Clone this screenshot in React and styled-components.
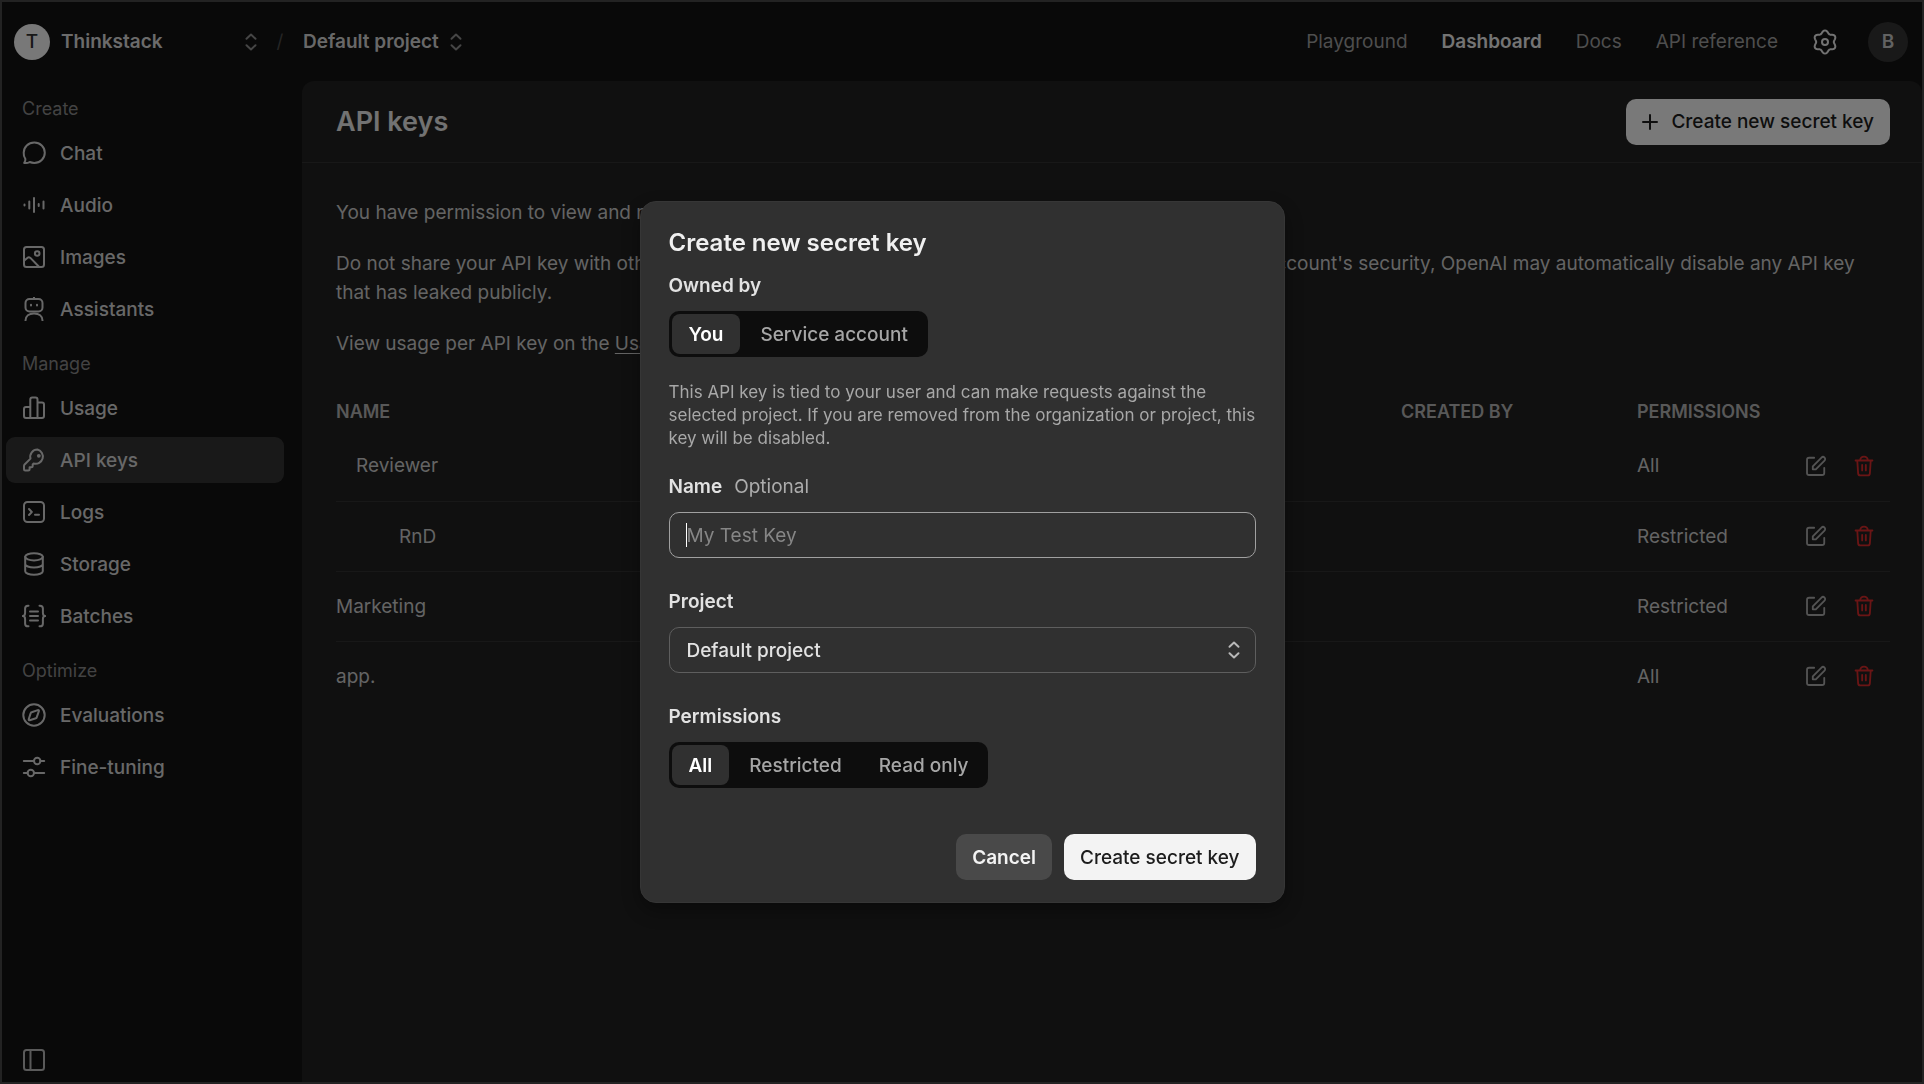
import React, { useState } from "react";
import styled, { createGlobalStyle, css } from "styled-components";

const GlobalStyle = createGlobalStyle`
  *, *::before, *::after { box-sizing: border-box; }
  html, body { margin: 0; background: #121212; }
  body, button, input, select {
    font-family: Inter, "Liberation Sans", sans-serif;
    font-size: 19px;
  }
  h1, h2, p { margin: 0; padding: 0; }
  a { color: inherit; text-decoration: none; }
  button { cursor: pointer; border: 0; background: none; padding: 0; color: inherit; }
`;

/* ---------- icons ---------- */

const Svg = styled.svg`
  display: block;
  flex: none;
  fill: none;
  stroke: currentColor;
  stroke-width: 2;
  stroke-linecap: round;
  stroke-linejoin: round;
`;

const Icon = ({ size = 24, children }) => (
  <Svg width={size} height={size} viewBox="0 0 24 24" aria-hidden="true">
    {children}
  </Svg>
);

const ChatIcon = () => (
  <Icon>
    <path d="M12.3 1.5c5.9 0 10.5 4.5 10.5 10.2s-4.600 10.200-10.500 10.200c-1.700 0-3.200-.3-4.600-.9-1.500.9-3.600 1.300-5.500.9.9-1.200 1.300-2.500 1.200-3.900A10 10 0 0 1 1.700 11.700C1.700 6 6.400 1.500 12.300 1.500z" />
  </Icon>
);
const AudioIcon = () => (
  <Icon>
    <path d="M2.500 11.500v1M7.300 8.500v7M12 5v14M16.700 11v2M21.500 8.500v7" />
  </Icon>
);
const ImagesIcon = () => (
  <Icon>
    <rect x="2" y="2" width="20" height="20" rx="2.500" />
    <circle cx="15.200" cy="8.500" r="2.300" />
    <path d="M2.300 15.500l3-2.600c.9-.8 2.200-.8 3.100 0l8.600 8.800" />
  </Icon>
);
const AssistantsIcon = () => (
  <Icon>
    <path d="M12 0v2" />
    <rect x="3.500" y="2" width="17" height="12.500" rx="4" />
    <path d="M9 7.800v.6M15 7.800v.6M3.500 23.500c0-4.600 3.600-7 8.500-7s8.500 2.400 8.500 7" />
  </Icon>
);
const UsageIcon = () => (
  <Icon>
    <path d="M8.300 22V3.500c0-1.200.8-2 2-2h3.200c1.200 0 2 .8 2 2V22M8.300 11H4c-1.200 0-2 .8-2 2v7c0 1.200.8 2 2 2h16c1.200 0 2-.8 2-2V8.500c0-1.200-.8-2-2-2h-4.500" />
  </Icon>
);
const KeyIcon = () => (
  <Icon>
    <path d="M15.500 1.500a7.200 7.200 0 0 0-7 9.100L2.600 16.500a2 2 0 0 0-.6 1.400v3.300c0 .7.5 1.200 1.200 1.200h2.900c.8 0 1.500-.7 1.500-1.500v-1.600h1.600c.8 0 1.500-.7 1.500-1.500v-1.300l1-1a7.200 7.200 0 1 0 3.800-14z" />
    <circle cx="16.800" cy="7.800" r="1.900" fill="currentColor" stroke="none" />
  </Icon>
);
const LogsIcon = () => (
  <Icon>
    <rect x="2" y="2" width="20" height="20" rx="3.500" />
    <path d="M7 9l2.800 3L7 15M13 14.800h4" />
  </Icon>
);
const StorageIcon = () => (
  <Icon>
    <ellipse cx="12" cy="4.800" rx="8.800" ry="3.600" />
    <path d="M3.200 4.800v14.400c0 2 3.900 3.600 8.800 3.600s8.800-1.600 8.800-3.600V4.800M3.200 12c0 2 3.900 3.600 8.800 3.600s8.800-1.600 8.800-3.600" />
  </Icon>
);
const BatchesIcon = () => (
  <Icon>
    <path d="M6.500 1.700H6c-1.800 0-2.900 1.100-2.900 2.900v4.200C3.100 10.300 2.300 12 .8 12c1.500 0 2.300 1.700 2.300 3.200v4.200c0 1.800 1.100 2.900 2.900 2.900h.5M17.500 1.700h.5c1.800 0 2.900 1.100 2.900 2.900v4.200c0 1.500.8 3.200 2.300 3.200-1.500 0-2.300 1.700-2.300 3.200v4.200c0 1.800-1.100 2.900-2.900 2.900h-.5M8 7.500h8M8 12h8M8 16.500h8" />
  </Icon>
);
const EvaluationsIcon = () => (
  <Icon>
    <circle cx="12" cy="12" r="10.700" />
    <path d="M9.600 9.300l6.200-2.200c.7-.2 1.300.4 1.100 1.100l-2.200 6.200c-.1.400-.4.700-.8.800l-6.200 2c-.7.200-1.200-.4-1-1l2-6.100c.1-.4.500-.7.900-.8z" />
  </Icon>
);
const TuningIcon = () => (
  <Icon>
    <circle cx="15.200" cy="6" r="3.200" />
    <circle cx="8.800" cy="18" r="3.200" />
    <path d="M1.800 6H12M18.400 6h3.800M1.800 18h3.800M12 18h10.200" />
  </Icon>
);
const PanelIcon = () => (
  <Icon>
    <rect x="2" y="2" width="20" height="20" rx="2.500" />
    <path d="M8.500 2v20" />
  </Icon>
);

const gearOutline =
  Array.from({ length: 72 }, (_, i) => {
    const a = (i / 72) * Math.PI * 2;
    const r = 10.2 + 1.4 * Math.cos(6 * a);
    const x = 13 + r * Math.sin(a);
    const y = 13 - r * Math.cos(a);
    return `${i ? "L" : "M"}${x.toFixed(2)} ${y.toFixed(2)}`;
  }).join("") + "z";

const GearIcon = () => (
  <Svg width={26} height={26} viewBox="0 0 26 26" aria-hidden="true">
    <path d={gearOutline} />
    <circle cx="13" cy="13" r="3" />
  </Svg>
);
const EditIcon = () => (
  <Icon size={22}>
    <path d="M10 3H4.500C3.100 3 2.200 3.900 2.200 5.300V19.500c0 1.400.9 2.300 2.300 2.300h14.200c1.400 0 2.300-.9 2.300-2.300V14" />
    <path d="M8.500 12.300L18 2.800a2.300 2.300 0 0 1 3.300 3.300l-9.500 9.500H8.500z" />
  </Icon>
);
const TrashIcon = () => (
  <Icon size={22}>
    <path d="M2.800 6h18.400M7.800 5.700C8 3.300 9.500 1.700 12 1.700s4 1.600 4.200 4M4.700 6.500l.9 13.500c.1 1.300 1 2.200 2.300 2.200h8.200c1.300 0 2.200-.9 2.300-2.200l.9-13.500M10 10.800v6M14 10.800v6" />
  </Icon>
);
const PlusIcon = () => (
  <Svg width={16} height={16} viewBox="0 0 16 16" aria-hidden="true">
    <path d="M8 1v14M1 8h14" />
  </Svg>
);
const ChevronsIcon = () => (
  <Svg width={12} height={18} viewBox="0 0 12 18" aria-hidden="true">
    <path d="M1.500 5.800L6 1.600l4.500 4.200M1.500 12.200L6 16.400l4.500-4.200" />
  </Svg>
);

/* ---------- page frame ---------- */

const Frame = styled.div`
  display: flex;
  flex-direction: column;
  min-height: 100vh;
  border: 2px solid #464646;
  background: #121212;
  color: #dadada;
`;

const TopBar = styled.header`
  display: flex;
  align-items: center;
  justify-content: space-between;
  height: 79px;
  padding: 0 14px 0 12px;
`;

const Switchers = styled.div`
  display: flex;
  align-items: center;
`;

const OrgButton = styled.button`
  display: flex;
  align-items: center;
  gap: 11px;
  width: 243px;
  font-weight: 600;
  color: #d6d6d6;
`;

const OrgName = styled.span`
  flex: 1;
  text-align: left;
`;

const Muted = styled.span`
  color: #8c8c8c;
`;

const Slash = styled.span`
  width: 46px;
  text-align: center;
  color: #4a4a4a;
`;

const ProjectButton = styled.button`
  display: flex;
  align-items: center;
  gap: 11px;
  font-weight: 600;
  color: #d0d0d0;
`;

const Avatar = styled.span`
  display: flex;
  align-items: center;
  justify-content: center;
  flex: none;
  border-radius: 50%;
  width: ${(p) => (p.$light ? 36 : 40)}px;
  height: ${(p) => (p.$light ? 36 : 40)}px;
  background: ${(p) => (p.$light ? "#f0f0f0" : "#323232")};
  color: ${(p) => (p.$light ? "#303030" : "#c4c4c4")};
  font-weight: ${(p) => (p.$light ? 500 : 600)};
`;

const TopNav = styled.nav`
  display: flex;
  align-items: center;
  gap: 34px;
`;

const TopLink = styled.a`
  color: ${(p) => (p.$active ? "#e8e8e8" : "#9c9c9c")};
  font-weight: ${(p) => (p.$active ? 600 : 400)};
`;

const AccountTools = styled.div`
  display: flex;
  align-items: center;
  gap: 30px;
`;

const ToolButton = styled.button`
  display: flex;
  color: ${(p) => (p.$danger ? "#d42a2a" : p.$bright ? "#e4e4e4" : "#a8a8a8")};
`;

const Body = styled.div`
  display: flex;
  flex: 1;
`;

/* ---------- sidebar ---------- */

const Sidebar = styled.nav`
  display: flex;
  flex-direction: column;
  width: 300px;
  padding: 13px 18px 10px 4px;
`;

const Group = styled.section`
  display: flex;
  flex-direction: column;
  gap: 6px;
  margin-bottom: 17px;
`;

const GroupLabel = styled.h2`
  padding-left: 16px;
  font-size: 18px;
  font-weight: 400;
  line-height: 30px;
  color: #868686;
`;

const NavItem = styled.a`
  display: flex;
  align-items: center;
  gap: 14px;
  height: 46px;
  padding-left: 16px;
  border-radius: 9px;
  font-weight: 500;
  color: #d0d0d0;
  background: ${(p) => (p.$active ? "#333333" : "transparent")};
`;

const CollapseButton = styled.button`
  display: flex;
  margin-top: auto;
  margin-left: 16px;
  color: #b4b4b4;
`;

/* ---------- main panel ---------- */

const Panel = styled.main`
  flex: 1;
  min-width: 0;
  border-radius: 12px 12px 0 0;
  background: #202020;
`;

const PanelHeader = styled.div`
  display: flex;
  align-items: center;
  justify-content: space-between;
  height: 82px;
  padding: 0 32px 0 34px;
  border-bottom: 1px solid #303030;
`;

const Title = styled.h1`
  font-size: 27px;
  font-weight: 600;
  color: #e4e4e4;
`;

const Button = styled.button`
  display: flex;
  align-items: center;
  gap: 13px;
  height: 46px;
  padding: 0 16px;
  border-radius: 10px;
  font-weight: ${(p) => (p.$variant === "secondary" ? 600 : 500)};
  background: ${(p) => (p.$variant === "secondary" ? "#494949" : "#f3f3f3")};
  color: ${(p) => (p.$variant === "secondary" ? "#f3f3f3" : "#1c1c1c")};
`;

const Content = styled.div`
  display: flex;
  flex-direction: column;
  gap: 22px;
  padding: 35px 32px 0 34px;
`;

const Text = styled.p`
  line-height: 29px;
  color: #c8c8c8;
`;

const Underlined = styled.a`
  text-decoration: underline;
  text-underline-offset: 3px;
`;

const Table = styled.table`
  width: 100%;
  margin-top: 13px;
  border-collapse: collapse;
  table-layout: fixed;
`;

const Col = styled.col`
  width: ${(p) => (p.$w ? `${p.$w}px` : "auto")};
`;

const Th = styled.th`
  padding: 0;
  text-align: left;
  font-size: 18px;
  font-weight: 600;
  line-height: 38px;
  text-transform: uppercase;
  color: #b0b0b0;
`;

const Tr = styled.tr`
  ${(p) =>
    p.$rule &&
    css`
      border-bottom: 1px solid #303030;
    `}
`;

const Td = styled.td`
  height: 70px;
  padding: 0 0 0 ${(p) => p.$indent || 0}px;
  color: #c8c8c8;
`;

const Actions = styled.div`
  display: flex;
  gap: 26px;
`;

/* ---------- dialog ---------- */

const Backdrop = styled.div`
  position: fixed;
  inset: 0;
  display: flex;
  align-items: center;
  justify-content: center;
  padding-top: 20px;
  background: rgba(0, 0, 0, 0.5);
`;

const Dialog = styled.form`
  width: 645px;
  padding: 25px 28px 22px;
  border: 1px solid #363636;
  border-radius: 16px;
  background: #303030;
  box-shadow: 0 8px 20px rgba(0, 0, 0, 0.35);
  color: #f0f0f0;
`;

const DialogTitle = styled.h2`
  margin-bottom: 12px;
  font-size: 24px;
  font-weight: 600;
  line-height: 32px;
`;

const Field = styled.div`
  display: flex;
  flex-direction: column;
  align-items: ${(p) => (p.$stretch ? "stretch" : "flex-start")};
  gap: 10px;
  margin-bottom: ${(p) => p.$after || 29}px;
`;

const FieldLabel = styled.label`
  display: flex;
  gap: 12px;
  font-weight: 600;
  line-height: 30px;
  color: #e2e2e2;
`;

const Optional = styled.span`
  font-weight: 400;
  color: #acacac;
`;

const Segments = styled.div`
  display: flex;
  gap: 3px;
  height: 46px;
  padding: 3px;
  border-radius: 10px;
  background: #0d0d0d;
`;

const Segment = styled.label`
  display: flex;
  align-items: center;
  padding: 0 17px;
  border-radius: 8px;
  font-weight: 500;
  color: #a6a6a6;
  cursor: pointer;
  &:has(input:checked) {
    background: #303030;
    color: #ffffff;
    font-weight: 600;
  }
`;

const HiddenRadio = styled.input`
  appearance: none;
  position: absolute;
  width: 1px;
  height: 1px;
  margin: 0;
  opacity: 0;
`;

const Note = styled.p`
  margin-bottom: 22px;
  font-size: 17px;
  line-height: 23px;
  color: #a8a8a8;
`;

const control = css`
  width: 100%;
  height: 46px;
  padding: 0 17px;
  border-radius: 10px;
  background: transparent;
  outline: none;
`;

const TextInput = styled.input`
  ${control}
  border: 1px solid #a0a0a0;
  color: #f0f0f0;
  caret-color: #ffffff;
  &::placeholder {
    color: #868686;
    opacity: 1;
  }
  &:placeholder-shown:focus {
    caret-color: transparent;
    background: linear-gradient(#ffffff, #ffffff) 16px center / 1px 24px no-repeat;
  }
`;

const SelectWrap = styled.div`
  display: grid;
  align-items: center;
  color: #b8b8b8;
  > * {
    grid-area: 1 / 1;
  }
  > svg {
    justify-self: end;
    margin-right: 16px;
    pointer-events: none;
  }
`;

const Select = styled.select`
  ${control}
  appearance: none;
  border: 1px solid #5e5e5e;
  font-weight: 500;
  color: #e2e2e2;
`;

const Footer = styled.div`
  display: flex;
  justify-content: flex-end;
  gap: 12px;
`;

/* ---------- data ---------- */

const groups = [
  {
    label: "Create",
    items: [
      ["Chat", ChatIcon],
      ["Audio", AudioIcon],
      ["Images", ImagesIcon],
      ["Assistants", AssistantsIcon],
    ],
  },
  {
    label: "Manage",
    items: [
      ["Usage", UsageIcon],
      ["API keys", KeyIcon],
      ["Logs", LogsIcon],
      ["Storage", StorageIcon],
      ["Batches", BatchesIcon],
    ],
  },
  {
    label: "Optimize",
    items: [
      ["Evaluations", EvaluationsIcon],
      ["Fine-tuning", TuningIcon],
    ],
  },
];

const keys = [
  { name: "Reviewer", indent: 20, permissions: "All" },
  { name: "RnD", indent: 63, permissions: "Restricted" },
  { name: "Marketing", permissions: "Restricted" },
  { name: "app.", permissions: "All" },
];

const SegmentedControl = ({ name, label, options }) => {
  const [value, setValue] = useState(options[0]);
  return (
    <Segments role="radiogroup" aria-label={label}>
      {options.map((o) => (
        <Segment key={o}>
          <HiddenRadio type="radio" name={name} checked={value === o} onChange={() => setValue(o)} />
          {o}
        </Segment>
      ))}
    </Segments>
  );
};

export default function App() {
  return (
    <>
      <GlobalStyle />
      <Frame>
        <TopBar>
          <Switchers>
            <OrgButton type="button">
              <Avatar $light>T</Avatar>
              <OrgName>Thinkstack</OrgName>
              <Muted>
                <ChevronsIcon />
              </Muted>
            </OrgButton>
            <Slash>/</Slash>
            <ProjectButton type="button">
              Default project
              <Muted>
                <ChevronsIcon />
              </Muted>
            </ProjectButton>
          </Switchers>
          <TopNav>
            <TopLink href="#playground">Playground</TopLink>
            <TopLink href="#dashboard" $active>
              Dashboard
            </TopLink>
            <TopLink href="#docs">Docs</TopLink>
            <TopLink href="#reference">API reference</TopLink>
            <AccountTools>
              <ToolButton type="button" aria-label="Settings" $bright>
                <GearIcon />
              </ToolButton>
              <Avatar>B</Avatar>
            </AccountTools>
          </TopNav>
        </TopBar>

        <Body>
          <Sidebar>
            {groups.map((g) => (
              <Group key={g.label}>
                <GroupLabel>{g.label}</GroupLabel>
                {g.items.map(([label, Glyph]) => (
                  <NavItem key={label} href="#" $active={label === "API keys"}>
                    <Glyph />
                    {label}
                  </NavItem>
                ))}
              </Group>
            ))}
            <CollapseButton type="button" aria-label="Collapse sidebar">
              <PanelIcon />
            </CollapseButton>
          </Sidebar>

          <Panel>
            <PanelHeader>
              <Title>API keys</Title>
              <Button type="button">
                <PlusIcon />
                Create new secret key
              </Button>
            </PanelHeader>
            <Content>
              <Text>You have permission to view and manage all API keys in this project.</Text>
              <Text>
                Do not share your API key with others or expose it in a browser or any client-side code. To protect
                your account's security, OpenAI may automatically disable any API key that has leaked publicly.
              </Text>
              <Text>
                View usage per API key on the <Underlined href="#usage">Usage page</Underlined>.
              </Text>
              <Table>
                <colgroup>
                  <Col />
                  <Col $w={236} />
                  <Col $w={168} />
                  <Col $w={85} />
                </colgroup>
                <thead>
                  <tr>
                    <Th>Name</Th>
                    <Th>Created by</Th>
                    <Th>Permissions</Th>
                    <Th aria-label="Actions" />
                  </tr>
                </thead>
                <tbody>
                  {keys.map((k, i) => (
                    <Tr key={k.name} $rule={i < keys.length - 1}>
                      <Td $indent={k.indent}>{k.name}</Td>
                      <Td />
                      <Td>{k.permissions}</Td>
                      <Td>
                        <Actions>
                          <ToolButton type="button" aria-label={`Edit ${k.name}`}>
                            <EditIcon />
                          </ToolButton>
                          <ToolButton type="button" aria-label={`Delete ${k.name}`} $danger>
                            <TrashIcon />
                          </ToolButton>
                        </Actions>
                      </Td>
                    </Tr>
                  ))}
                </tbody>
              </Table>
            </Content>
          </Panel>
        </Body>
      </Frame>

      <Backdrop>
        <Dialog role="dialog" aria-modal="true" aria-labelledby="dialog-title">
          <DialogTitle id="dialog-title">Create new secret key</DialogTitle>
          <Field $after={24}>
            <FieldLabel as="span">Owned by</FieldLabel>
            <SegmentedControl name="owner" label="Owned by" options={["You", "Service account"]} />
          </Field>
          <Note>
            This API key is tied to your user and can make requests against the selected project. If you are removed
            from the organization or project, this key will be disabled.
          </Note>
          <Field $stretch>
            <FieldLabel htmlFor="key-name">
              Name <Optional>Optional</Optional>
            </FieldLabel>
            <TextInput id="key-name" placeholder="My Test Key" autoFocus />
          </Field>
          <Field $stretch>
            <FieldLabel htmlFor="key-project">Project</FieldLabel>
            <SelectWrap>
              <Select id="key-project" defaultValue="default">
                <option value="default">Default project</option>
              </Select>
              <ChevronsIcon />
            </SelectWrap>
          </Field>
          <Field $after={46}>
            <FieldLabel as="span">Permissions</FieldLabel>
            <SegmentedControl name="permissions" label="Permissions" options={["All", "Restricted", "Read only"]} />
          </Field>
          <Footer>
            <Button type="button" $variant="secondary">
              Cancel
            </Button>
            <Button type="button">Create secret key</Button>
          </Footer>
        </Dialog>
      </Backdrop>
    </>
  );
}
